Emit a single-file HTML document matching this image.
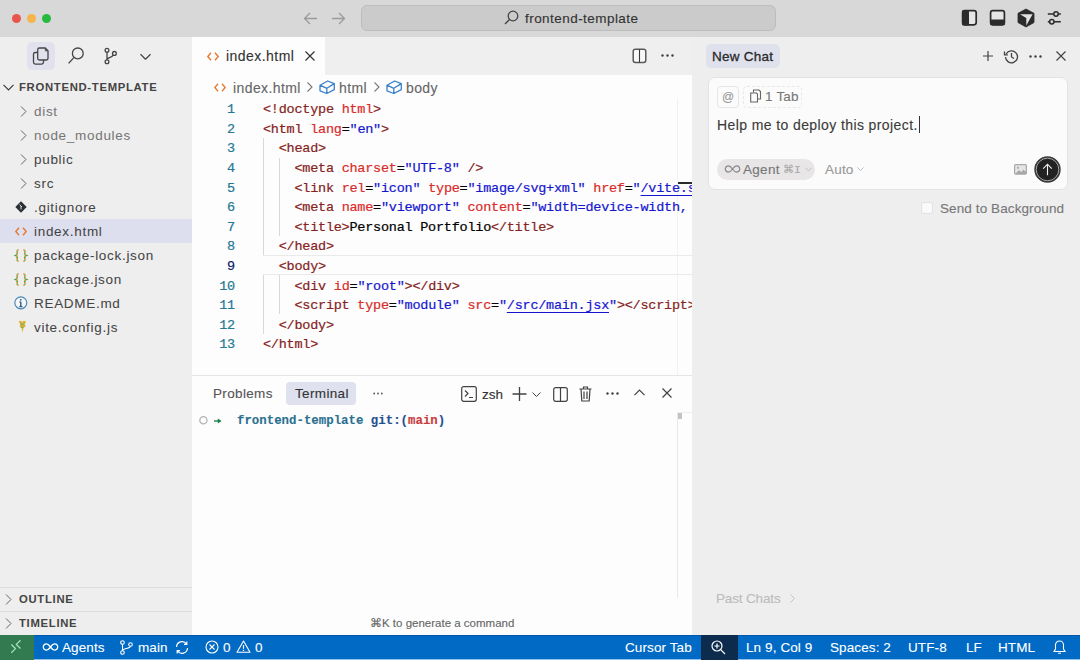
<!DOCTYPE html>
<html><head><meta charset="utf-8">
<style>
*{box-sizing:border-box;margin:0;padding:0}
html,body{width:1080px;height:660px;overflow:hidden;background:#eeeeee;font-family:"Liberation Sans",sans-serif;color:#333}
.a{position:absolute}
.t{position:absolute;white-space:pre;line-height:1;-webkit-text-stroke:0.12px currentColor}
svg{position:absolute;overflow:visible}
/* title bar */
#title{left:0;top:0;width:1080px;height:37px;background:#d8d8d8}
.dot{position:absolute;width:9px;height:9px;border-radius:50%;top:13.5px}
/* sidebar */
#side{left:0;top:37px;width:192px;height:598px;background:#eeeeee}
.row{position:absolute;left:0;width:192px;height:24px}
.row .n{position:absolute;left:34px;top:5.5px;font-size:13.5px;color:#444;letter-spacing:0.7px;-webkit-text-stroke:0.04px currentColor;white-space:pre;line-height:1}
/* editor */
#editor{left:192px;top:37px;width:500px;height:598px;background:#fdfdfd}
#tabbar{left:192px;top:37px;width:500px;height:38px;background:#efefef}
#tab{left:192px;top:37px;width:133px;height:38px;background:#fdfdfd}
.code{position:absolute;left:263px;font-family:"Liberation Mono",monospace;font-size:13.5px;letter-spacing:-0.24px;line-height:19.6px;white-space:pre;color:#000}
.ln{position:absolute;left:200px;width:35px;text-align:right;font-family:"Liberation Mono",monospace;font-size:13.5px;letter-spacing:-0.2px;line-height:19.6px;color:#237893}
.code,.ln{-webkit-text-stroke:0.2px currentColor}
u{text-underline-offset:2.5px;text-decoration-thickness:1.3px}
.tg{color:#852222}.at{color:#d92b2b}.vl{color:#1616d0}
/* chat */
#chat{left:692px;top:37px;width:388px;height:598px;background:#eeeeee}
#status{left:0;top:635px;width:1080px;height:25px;background:#006ac4;border-top:1px solid #0256ac;border-bottom:1px solid #8fc2ec}
.st{position:absolute;top:641px;font-size:13.5px;color:#ffffff;white-space:pre;line-height:1;letter-spacing:0.1px;-webkit-text-stroke:0.1px #fff}
</style></head>
<body>
<!-- TITLE BAR -->
<div id="title" class="a"></div>
<div class="dot" style="left:11.5px;background:#e8554d"></div>
<div class="dot" style="left:26.5px;background:#f5b54a"></div>
<div class="dot" style="left:41.5px;background:#26bb3d"></div>
<svg style="left:303px;top:12px" width="15" height="13" viewBox="0 0 15 13"><path d="M14 6.5H1.5M7 1L1.5 6.5L7 12" fill="none" stroke="#9a9a9a" stroke-width="1.3"/></svg>
<svg style="left:331px;top:12px" width="15" height="13" viewBox="0 0 15 13"><path d="M1 6.5H13.5M8 1L13.5 6.5L8 12" fill="none" stroke="#9a9a9a" stroke-width="1.3"/></svg>
<div class="a" style="left:361px;top:5px;width:415px;height:26px;background:#cbcbcb;border:1px solid #bdbdbd;border-radius:6px"></div>
<svg style="left:504px;top:10px" width="15" height="15" viewBox="0 0 15 15"><circle cx="9" cy="6" r="4.8" fill="none" stroke="#444" stroke-width="1.3"/><path d="M5.5 9.5L1 14" stroke="#444" stroke-width="1.4"/></svg>
<div class="t" style="left:525px;top:12px;font-size:13.5px;color:#333;letter-spacing:0.45px">frontend-template</div>
<!-- right title icons -->
<svg style="left:961px;top:9px" width="17" height="17" viewBox="0 0 17 17"><rect x="1.6" y="1.6" width="13.6" height="14.2" rx="2.2" fill="#e6e6e6" stroke="#2b2b2b" stroke-width="1.7"/><rect x="1" y="1" width="7" height="15.4" rx="1.5" fill="#2b2b2b"/></svg>
<svg style="left:989px;top:9px" width="17" height="17" viewBox="0 0 17 17"><rect x="1.6" y="1.6" width="13.8" height="14.2" rx="2.2" fill="#e6e6e6" stroke="#2b2b2b" stroke-width="1.7"/><rect x="1" y="10.5" width="15" height="5.8" rx="1.5" fill="#2b2b2b"/></svg>
<svg style="left:1017px;top:8px" width="18" height="20" viewBox="0 0 18 20"><path d="M9 1L17 5.3V14.5L9 19L1 14.5V5.3Z" fill="#2b2b2b" stroke="#2b2b2b" stroke-width="0.8" stroke-linejoin="round"/><path d="M3 6.3H15.6L9.3 17.6V10Z" fill="#e2e2e2"/></svg>
<svg style="left:1047px;top:10px" width="15" height="15" viewBox="0 0 15 15"><path d="M0.8 4H6.8M11.2 4H13.8M0.8 11.7H2.6M7 11.7H13.8" stroke="#2b2b2b" stroke-width="1.5"/><circle cx="9" cy="4" r="2.2" fill="none" stroke="#2b2b2b" stroke-width="1.5"/><circle cx="4.8" cy="11.7" r="2.2" fill="none" stroke="#2b2b2b" stroke-width="1.5"/></svg>

<!-- SIDEBAR -->
<div id="side" class="a"></div>
<div class="a" style="left:27px;top:42px;width:28px;height:28px;background:#e1e2ee;border-radius:5px"></div>
<svg style="left:0;top:0" width="192" height="80" viewBox="0 0 192 80"><g fill="none" stroke="#454545" stroke-width="1.3" stroke-linejoin="round">
<path d="M37.5 52.5H35.3A1.8 1.8 0 0 0 33.5 54.3V62.3A1.8 1.8 0 0 0 35.3 64.1H41.7A1.8 1.8 0 0 0 43.5 62.3V60"/>
<path d="M39.5 48H45.3L48 50.8V58.2A1.8 1.8 0 0 1 46.2 60H39.5A1.8 1.8 0 0 1 37.7 58.2V49.8A1.8 1.8 0 0 1 39.5 48Z"/>
<path d="M45.3 48.2V50.8H47.8" stroke-width="1"/>
<circle cx="77.8" cy="53.4" r="5.4"/><path d="M73.8 57.6L68.6 63.4" stroke-width="1.4"/>
<circle cx="107" cy="50.3" r="1.9"/><circle cx="107" cy="61.8" r="1.9"/><circle cx="114.4" cy="53.4" r="1.9"/>
<path d="M107 52.2V59.9M113.2 54.9C112 57.6 108.5 57.5 107 59.2"/>
<path d="M140.5 54.3L145.5 59.2L150.5 54.3" stroke-width="1.2"/>
</g></svg>

<svg style="left:3px;top:84px" width="11" height="7" viewBox="0 0 11 7"><path d="M0.5 0.8L5.5 5.8L10.5 0.8" fill="none" stroke="#3b3b3b" stroke-width="1.2"/></svg>
<div class="t" style="left:19px;top:82px;font-size:11.3px;font-weight:bold;color:#444;letter-spacing:0.7px;-webkit-text-stroke:0">FRONTEND-TEMPLATE</div>

<div class="row" style="top:99px"><svg style="left:20px;top:7px" width="7" height="11" viewBox="0 0 7 11"><path d="M1 0.5L6 5.5L1 10.5" fill="none" stroke="#666" stroke-width="1"/></svg><div class="n" style="color:#777">dist</div></div>
<div class="row" style="top:123px"><svg style="left:20px;top:7px" width="7" height="11" viewBox="0 0 7 11"><path d="M1 0.5L6 5.5L1 10.5" fill="none" stroke="#666" stroke-width="1"/></svg><div class="n" style="color:#777">node_modules</div></div>
<div class="row" style="top:147px"><svg style="left:20px;top:7px" width="7" height="11" viewBox="0 0 7 11"><path d="M1 0.5L6 5.5L1 10.5" fill="none" stroke="#666" stroke-width="1"/></svg><div class="n">public</div></div>
<div class="row" style="top:171px"><svg style="left:20px;top:7px" width="7" height="11" viewBox="0 0 7 11"><path d="M1 0.5L6 5.5L1 10.5" fill="none" stroke="#666" stroke-width="1"/></svg><div class="n">src</div></div>
<div class="row" style="top:195px"><svg style="left:15px;top:6px" width="12" height="12" viewBox="0 0 12 12"><path d="M6 0.3L11.7 6L6 11.7L0.3 6Z" fill="#2a2f33"/><path d="M4.5 3.5L7 6M6 5V8.5" stroke="#eee" stroke-width="0.9"/></svg><div class="n">.gitignore</div></div>
<div class="row" style="top:219px;background:#dedfee"><svg style="left:15px;top:8px" width="12" height="9" viewBox="0 0 12 9"><path d="M4 0.8L0.8 4.5L4 8.2M8 0.8L11.2 4.5L8 8.2" fill="none" stroke="#e37933" stroke-width="1.4"/></svg><div class="n">index.html</div></div>
<div class="row" style="top:243px"><svg style="left:15px;top:5.5px" width="12" height="13" viewBox="0 0 12 13"><path d="M3.6 0.8C1.8 0.8 2.2 2.5 2.2 4.3C2.2 5.6 1.6 6.2 0.8 6.5C1.6 6.8 2.2 7.4 2.2 8.7C2.2 10.5 1.8 12.2 3.6 12.2M8.4 0.8C10.2 0.8 9.8 2.5 9.8 4.3C9.8 5.6 10.4 6.2 11.2 6.5C10.4 6.8 9.8 7.4 9.8 8.7C9.8 10.5 10.2 12.2 8.4 12.2" fill="none" stroke="#d49a30" stroke-width="1.7" stroke-dasharray="1.6 0.9"/><path d="M3.6 0.8C1.8 0.8 2.2 2.5 2.2 4.3C2.2 5.6 1.6 6.2 0.8 6.5C1.6 6.8 2.2 7.4 2.2 8.7C2.2 10.5 1.8 12.2 3.6 12.2M8.4 0.8C10.2 0.8 9.8 2.5 9.8 4.3C9.8 5.6 10.4 6.2 11.2 6.5C10.4 6.8 9.8 7.4 9.8 8.7C9.8 10.5 10.2 12.2 8.4 12.2" fill="none" stroke="#4c9f58" stroke-width="1.7" stroke-dasharray="0.9 1.6" stroke-dashoffset="-1.6"/></svg><div class="n">package-lock.json</div></div>
<div class="row" style="top:267px"><svg style="left:15px;top:5.5px" width="12" height="13" viewBox="0 0 12 13"><path d="M3.6 0.8C1.8 0.8 2.2 2.5 2.2 4.3C2.2 5.6 1.6 6.2 0.8 6.5C1.6 6.8 2.2 7.4 2.2 8.7C2.2 10.5 1.8 12.2 3.6 12.2M8.4 0.8C10.2 0.8 9.8 2.5 9.8 4.3C9.8 5.6 10.4 6.2 11.2 6.5C10.4 6.8 9.8 7.4 9.8 8.7C9.8 10.5 10.2 12.2 8.4 12.2" fill="none" stroke="#d49a30" stroke-width="1.7" stroke-dasharray="1.6 0.9"/><path d="M3.6 0.8C1.8 0.8 2.2 2.5 2.2 4.3C2.2 5.6 1.6 6.2 0.8 6.5C1.6 6.8 2.2 7.4 2.2 8.7C2.2 10.5 1.8 12.2 3.6 12.2M8.4 0.8C10.2 0.8 9.8 2.5 9.8 4.3C9.8 5.6 10.4 6.2 11.2 6.5C10.4 6.8 9.8 7.4 9.8 8.7C9.8 10.5 10.2 12.2 8.4 12.2" fill="none" stroke="#4c9f58" stroke-width="1.7" stroke-dasharray="0.9 1.6" stroke-dashoffset="-1.6"/></svg><div class="n">package.json</div></div>
<div class="row" style="top:291px"><svg style="left:14px;top:4.5px" width="14" height="14" viewBox="0 0 14 14"><circle cx="6.8" cy="6.8" r="6" fill="#f4f6f8" stroke="#4c88b6" stroke-width="1.2"/><path d="M6.8 6V10.6M5.3 10.6H8.4M5.5 6H6.8" stroke="#2a5d85" stroke-width="1.4"/><circle cx="6.8" cy="3.8" r="0.9" fill="#2a5d85"/></svg><div class="n">README.md</div></div>
<div class="row" style="top:315px"><svg style="left:17.5px;top:4.5px" width="9" height="13" viewBox="0 0 9 13"><path d="M0.5 1.2L3 0.8L4.2 2L5.5 0.8L8.2 1.2L6.8 4L7.6 6.2L5.6 8L4.3 12.5L3.6 8.2L1.6 6.4L2.2 4Z" fill="#e0b33c"/><path d="M2.2 3.2L4.3 5L6.4 3.2M3 6.5L4.3 8L5.8 6.5" fill="none" stroke="#5aa85e" stroke-width="0.9"/></svg><div class="n">vite.config.js</div></div>

<div class="a" style="left:0;top:587px;width:192px;height:1px;background:#dcdcdc"></div>
<div class="a" style="left:0;top:611px;width:192px;height:1px;background:#dcdcdc"></div>
<svg style="left:5px;top:594px" width="7" height="11" viewBox="0 0 7 11"><path d="M1 0.5L6 5.5L1 10.5" fill="none" stroke="#666" stroke-width="1"/></svg>
<div class="t" style="left:19px;top:594px;font-size:11.3px;font-weight:bold;color:#444;letter-spacing:0.7px;-webkit-text-stroke:0">OUTLINE</div>
<svg style="left:5px;top:618px" width="7" height="11" viewBox="0 0 7 11"><path d="M1 0.5L6 5.5L1 10.5" fill="none" stroke="#666" stroke-width="1"/></svg>
<div class="t" style="left:19px;top:618px;font-size:11.3px;font-weight:bold;color:#444;letter-spacing:0.7px;-webkit-text-stroke:0">TIMELINE</div>

<!-- EDITOR -->
<div id="editor" class="a"></div>
<div id="tabbar" class="a"></div>
<div id="tab" class="a"></div>
<svg style="left:207px;top:52px" width="12" height="9" viewBox="0 0 12 9"><path d="M4 0.8L0.8 4.5L4 8.2M8 0.8L11.2 4.5L8 8.2" fill="none" stroke="#e37933" stroke-width="1.4"/></svg>
<div class="t" style="left:226px;top:49px;font-size:14px;color:#333;letter-spacing:0.45px">index.html</div>
<svg style="left:305px;top:51px" width="10" height="10" viewBox="0 0 10 10"><path d="M0.5 0.5L9.5 9.5M9.5 0.5L0.5 9.5" stroke="#333" stroke-width="1.2"/></svg>
<svg style="left:632px;top:47.5px" width="15" height="16" viewBox="0 0 15 16"><rect x="1.2" y="1.2" width="12.6" height="13.2" rx="2.2" fill="#f8f8f8" stroke="#5a5a5a" stroke-width="1.5"/><path d="M7.5 1.2V14.4" stroke="#3a3a3a" stroke-width="1.1"/></svg>
<svg style="left:661px;top:54px" width="13" height="3" viewBox="0 0 13 3"><circle cx="1.5" cy="1.5" r="1.2" fill="#424242"/><circle cx="6.5" cy="1.5" r="1.2" fill="#424242"/><circle cx="11.5" cy="1.5" r="1.2" fill="#424242"/></svg>

<!-- breadcrumb -->
<svg style="left:214px;top:83px" width="12" height="9" viewBox="0 0 12 9"><path d="M4 0.8L0.8 4.5L4 8.2M8 0.8L11.2 4.5L8 8.2" fill="none" stroke="#e37933" stroke-width="1.3"/></svg>
<div class="t" style="left:233px;top:81px;font-size:14px;color:#666;letter-spacing:0.4px">index.html</div>
<svg style="left:307px;top:82px" width="6" height="10" viewBox="0 0 6 10"><path d="M0.5 0.5L5 5L0.5 9.5" fill="none" stroke="#777" stroke-width="1.1"/></svg>
<svg style="left:319px;top:80px" width="16" height="14" viewBox="0 0 16 14"><path d="M1 5.2L8.6 1L15.3 3.6V9.6L7.8 13.5L1 10.8Z M1 5.2L7.8 8.3L15.3 3.6 M7.8 8.3V13.5" fill="none" stroke="#3a80c8" stroke-width="1.3" stroke-linejoin="round"/></svg>
<div class="t" style="left:339px;top:81px;font-size:14px;color:#666;letter-spacing:0.4px">html</div>
<svg style="left:374px;top:82px" width="6" height="10" viewBox="0 0 6 10"><path d="M0.5 0.5L5 5L0.5 9.5" fill="none" stroke="#777" stroke-width="1.1"/></svg>
<svg style="left:386px;top:80px" width="16" height="14" viewBox="0 0 16 14"><path d="M1 5.2L8.6 1L15.3 3.6V9.6L7.8 13.5L1 10.8Z M1 5.2L7.8 8.3L15.3 3.6 M7.8 8.3V13.5" fill="none" stroke="#3a80c8" stroke-width="1.3" stroke-linejoin="round"/></svg>
<div class="t" style="left:406px;top:81px;font-size:14px;color:#666;letter-spacing:0.4px">body</div>

<div class="a" style="left:677px;top:98px;width:1px;height:277px;background:#f2f2f2"></div>
<!-- current line -->
<div class="a" style="left:263px;top:255px;width:429px;height:20px;border-top:1px solid #eaeaea;border-bottom:1px solid #eaeaea"></div>
<!-- indent guides -->
<div class="a" style="left:263px;top:138px;width:1px;height:117px;background:#d9d9d9"></div>
<div class="a" style="left:279px;top:158px;width:1px;height:78px;background:#d9d9d9"></div>
<div class="a" style="left:263px;top:275px;width:1px;height:59px;background:#d9d9d9"></div>
<div class="a" style="left:279px;top:275px;width:1px;height:39px;background:#d9d9d9"></div>

<div class="ln" style="top:100.2px">1<br>2<br>3<br>4<br>5<br>6<br>7<br>8<br><span style="color:#0b216f">9</span><br>10<br>11<br>12<br>13</div>
<div class="code" style="top:100.2px;width:429px;overflow:hidden"><span class="tg">&lt;!doctype</span> <span class="at">html</span><span class="tg">&gt;</span>
<span class="tg">&lt;html</span> <span class="at">lang</span>=<span class="vl">"en"</span><span class="tg">&gt;</span>
  <span class="tg">&lt;head&gt;</span>
    <span class="tg">&lt;meta</span> <span class="at">charset</span>=<span class="vl">"UTF-8"</span> <span class="tg">/&gt;</span>
    <span class="tg">&lt;link</span> <span class="at">rel</span>=<span class="vl">"icon"</span> <span class="at">type</span>=<span class="vl">"image/svg+xml"</span> <span class="at">href</span>=<span class="vl">"<u>/vite.svg</u>"</span> <span class="tg">/&gt;</span>
    <span class="tg">&lt;meta</span> <span class="at">name</span>=<span class="vl">"viewport"</span> <span class="at">content</span>=<span class="vl">"width=device-width, initial-scale=1.0"</span> <span class="tg">/&gt;</span>
    <span class="tg">&lt;title&gt;</span>Personal Portfolio<span class="tg">&lt;/title&gt;</span>
  <span class="tg">&lt;/head&gt;</span>
  <span class="tg">&lt;body&gt;</span>
    <span class="tg">&lt;div</span> <span class="at">id</span>=<span class="vl">"root"</span><span class="tg">&gt;&lt;/div&gt;</span>
    <span class="tg">&lt;script</span> <span class="at">type</span>=<span class="vl">"module"</span> <span class="at">src</span>=<span class="vl">"<u>/src/main.jsx</u>"</span><span class="tg">&gt;&lt;/script&gt;</span>
  <span class="tg">&lt;/body&gt;</span>
<span class="tg">&lt;/html&gt;</span></div>

<div class="a" style="left:678px;top:182px;width:14px;height:2px;background:#2a2a2a"></div>
<!-- PANEL -->
<div class="a" style="left:192px;top:375px;width:500px;height:1px;background:#e5e5e5"></div>
<div class="t" style="left:213px;top:387px;font-size:13.5px;color:#555;letter-spacing:0.35px">Problems</div>
<div class="a" style="left:286px;top:382px;width:70px;height:23px;background:#dfe1ee;border-radius:4px"></div>
<div class="t" style="left:295px;top:387px;font-size:13.5px;color:#333;letter-spacing:0.35px">Terminal</div>
<svg style="left:373px;top:392px" width="10" height="3" viewBox="0 0 10 3"><circle cx="1.2" cy="1.5" r="0.9" fill="#555"/><circle cx="5" cy="1.5" r="0.9" fill="#555"/><circle cx="8.8" cy="1.5" r="0.9" fill="#555"/></svg>
<svg style="left:461px;top:386px" width="16" height="16" viewBox="0 0 16 16"><rect x="0.7" y="0.7" width="14.6" height="14.6" rx="2" fill="none" stroke="#424242" stroke-width="1.2"/><path d="M4 4.5L7 7.5L4 10.5M8 11.5H12" fill="none" stroke="#424242" stroke-width="1.2"/></svg>
<div class="t" style="left:482px;top:388px;font-size:13.5px;color:#333">zsh</div>
<svg style="left:512px;top:387px" width="15" height="14" viewBox="0 0 15 14"><path d="M7.5 0V14M0.5 7H14.5" stroke="#424242" stroke-width="1.3"/></svg>
<svg style="left:532px;top:392px" width="9" height="5" viewBox="0 0 9 5"><path d="M0.5 0.5L4.5 4.5L8.5 0.5" fill="none" stroke="#424242" stroke-width="1"/></svg>
<svg style="left:553px;top:387px" width="15" height="15" viewBox="0 0 15 15"><rect x="0.7" y="0.7" width="13.6" height="13.6" rx="2" fill="none" stroke="#424242" stroke-width="1.2"/><path d="M7.5 0.7V14.3" stroke="#424242" stroke-width="1.2"/></svg>
<svg style="left:579px;top:386px" width="13" height="16" viewBox="0 0 13 16"><path d="M0.5 3H12.5M4.5 3V1H8.5V3M2 3L2.8 15H10.2L11 3M5 5.5V13M8 5.5V13" fill="none" stroke="#424242" stroke-width="1.2"/></svg>
<svg style="left:606px;top:392px" width="13" height="3" viewBox="0 0 13 3"><circle cx="1.5" cy="1.5" r="1.2" fill="#424242"/><circle cx="6.5" cy="1.5" r="1.2" fill="#424242"/><circle cx="11.5" cy="1.5" r="1.2" fill="#424242"/></svg>
<svg style="left:634px;top:389px" width="11" height="7" viewBox="0 0 11 7"><path d="M0.5 6.2L5.5 1.2L10.5 6.2" fill="none" stroke="#424242" stroke-width="1.2"/></svg>
<svg style="left:662px;top:388px" width="10" height="10" viewBox="0 0 10 10"><path d="M0.5 0.5L9.5 9.5M9.5 0.5L0.5 9.5" stroke="#424242" stroke-width="1.2"/></svg>
<svg style="left:199px;top:415.5px" width="9" height="9" viewBox="0 0 9 9"><circle cx="4.4" cy="4.2" r="3.6" fill="none" stroke="#b4b4b4" stroke-width="1.3"/></svg>
<svg style="left:213.5px;top:418px" width="8" height="6" viewBox="0 0 8 6"><path d="M0 3H4.5" stroke="#17804a" stroke-width="1.4"/><path d="M3.8 0.4L7.6 3L3.8 5.6Z" fill="#17804a"/></svg>
<div class="t" style="left:237px;top:415px;font-family:'Liberation Mono',monospace;font-size:12.4px;font-weight:bold;color:#2b7090">frontend-template <span style="color:#1f4f8f">git:(</span><span style="color:#c83b3b">main</span><span style="color:#1f4f8f">)</span></div>
<div class="a" style="left:677px;top:412px;width:1px;height:186px;background:#e9e9e9"></div>
<div class="a" style="left:677px;top:412px;width:15px;height:1px;background:#efefef"></div>
<div class="a" style="left:678px;top:413px;width:4px;height:6px;background:#c4c4c4"></div>
<div class="t" style="left:370px;top:618px;font-size:11.5px;color:#666;letter-spacing:0px">⌘K to generate a command</div>

<!-- CHAT -->
<div id="chat" class="a"></div>
<div class="a" style="left:706px;top:44px;width:74px;height:24px;background:#dfe1ec;border-radius:5px"></div>
<div class="t" style="left:712px;top:50px;font-size:13.5px;color:#2a2a2a;letter-spacing:0.25px;-webkit-text-stroke:0.3px #2a2a2a">New Chat</div>
<svg style="left:983px;top:51px" width="10" height="10" viewBox="0 0 10 10"><path d="M5 0V10M0 5H10" stroke="#424242" stroke-width="1.2"/></svg>
<svg style="left:1004px;top:49px" width="15" height="15" viewBox="0 0 15 15"><path d="M2.2 5A6 6 0 1 1 1.5 8" fill="none" stroke="#424242" stroke-width="1.3"/><path d="M0.5 2.5V5.8H3.8" fill="none" stroke="#424242" stroke-width="1.3"/><path d="M7.5 4V8L10 9.5" fill="none" stroke="#424242" stroke-width="1.3"/></svg>
<svg style="left:1029px;top:55px" width="13" height="3" viewBox="0 0 13 3"><circle cx="1.5" cy="1.5" r="1.2" fill="#424242"/><circle cx="6.5" cy="1.5" r="1.2" fill="#424242"/><circle cx="11.5" cy="1.5" r="1.2" fill="#424242"/></svg>
<svg style="left:1056px;top:51px" width="10" height="10" viewBox="0 0 10 10"><path d="M0.5 0.5L9.5 9.5M9.5 0.5L0.5 9.5" stroke="#424242" stroke-width="1.2"/></svg>

<div class="a" style="left:708px;top:77px;width:360px;height:113px;background:#fcfbfb;border:1px solid #e3e3e3;border-radius:7px"></div>
<div class="a" style="left:717px;top:86px;width:22px;height:22px;border:1px solid #e6e6e6;border-radius:4px"></div>
<div class="t" style="left:722px;top:91px;font-size:12px;color:#999">@</div>
<div class="a" style="left:743px;top:86px;width:59px;height:22px;border:1px dashed #e9e7e7;border-radius:4px"></div>
<svg style="left:750px;top:89px" width="11" height="14" viewBox="0 0 11 14"><path d="M3.5 3.5V1H9L10.5 2.5V10H7.5" fill="none" stroke="#666" stroke-width="1.1"/><path d="M0.7 4H6.5L7.5 5V13H0.7Z" fill="none" stroke="#666" stroke-width="1.1"/></svg>
<div class="t" style="left:765px;top:90px;font-size:13.5px;color:#777;letter-spacing:0.2px">1 Tab</div>
<div class="t" style="left:717px;top:118px;font-size:14px;color:#3a3a3a;letter-spacing:0.4px">Help me to deploy this project.</div>
<div class="a" style="left:919px;top:116px;width:1px;height:17px;background:#333"></div>

<div class="a" style="left:717px;top:159px;width:98px;height:21px;background:#e8e6e6;border-radius:11px"></div>
<svg style="left:725px;top:165px" width="15" height="8" viewBox="0 0 15 8"><path d="M7.5 4C5.5 1.2 4.5 0.8 3.5 0.8A3.2 3.2 0 0 0 3.5 7.2C4.5 7.2 5.5 6.8 7.5 4C9.5 1.2 10.5 0.8 11.5 0.8A3.2 3.2 0 0 1 11.5 7.2C10.5 7.2 9.5 6.8 7.5 4Z" fill="none" stroke="#888" stroke-width="1.2"/></svg>
<div class="t" style="left:743px;top:163px;font-size:13.5px;color:#777;letter-spacing:0.3px">Agent</div>
<div class="t" style="left:783px;top:164px;font-size:10.5px;color:#aaa">⌘<span style="font-family:'Liberation Mono',monospace;font-size:11.5px">I</span></div>
<svg style="left:805px;top:167px" width="7" height="5" viewBox="0 0 7 5"><path d="M0.5 0.8L3.5 3.8L6.5 0.8" fill="none" stroke="#b8b8b8" stroke-width="0.9"/></svg>
<div class="t" style="left:825px;top:163px;font-size:13.5px;color:#999;letter-spacing:0.2px">Auto</div>
<svg style="left:857px;top:167px" width="7" height="5" viewBox="0 0 7 5"><path d="M0.5 0.5L3.5 3.5L6.5 0.5" fill="none" stroke="#bbb" stroke-width="1"/></svg>
<svg style="left:1014px;top:164px" width="13" height="11" viewBox="0 0 13 11"><rect x="0.6" y="0.6" width="11.8" height="9.6" rx="1.2" fill="#e6e4e4" stroke="#a8a8a8" stroke-width="1.2"/><path d="M1 10L5 6.2L7.5 8L9.5 5.5L12.4 8.5V10Z" fill="#a8a8a8"/><circle cx="4" cy="3.8" r="1.1" fill="#a8a8a8"/></svg>
<svg style="left:1034px;top:156px" width="27" height="27" viewBox="0 0 27 27"><circle cx="13.5" cy="13.5" r="12.6" fill="#222" stroke="#3a3a3a" stroke-width="1.2"/><circle cx="13.5" cy="13.5" r="11.3" fill="none" stroke="#b9b5b5" stroke-width="0.9"/></svg>
<svg style="left:1042px;top:163px" width="11" height="13" viewBox="0 0 11 13"><path d="M5.5 12.2V1.2M1.2 5.6L5.5 1.2L9.8 5.6" fill="none" stroke="#f2f2f2" stroke-width="1.1"/></svg>

<div class="a" style="left:921px;top:202px;width:12px;height:12px;background:#fafafa;border:1px solid #e2e2e2;border-radius:3px"></div>
<div class="t" style="left:940px;top:202px;font-size:13.5px;color:#777;letter-spacing:0.1px">Send to Background</div>
<div class="t" style="left:716px;top:592px;font-size:13.5px;color:#bcbcbc;letter-spacing:-0.15px">Past Chats</div>
<svg style="left:790px;top:594px" width="5" height="9" viewBox="0 0 5 9"><path d="M0.5 0.5L4.5 4.5L0.5 8.5" fill="none" stroke="#c4c4c4" stroke-width="1"/></svg>

<!-- STATUS -->
<div id="status" class="a"></div>
<div class="a" style="left:0;top:635px;width:34px;height:25px;background:#327a50"></div>
<svg style="left:10px;top:639px" width="12" height="15" viewBox="0 0 12 15"><path d="M1.3 5.5L5.5 9.6L1.3 13.7M10.5 1.3L6.3 5.4L10.5 9.5" fill="none" stroke="#a6e6bd" stroke-width="1.2"/></svg>
<svg style="left:43px;top:643px" width="15" height="8" viewBox="0 0 15 8"><path d="M7.5 4C5.5 1.2 4.5 0.8 3.5 0.8A3.2 3.2 0 0 0 3.5 7.2C4.5 7.2 5.5 6.8 7.5 4C9.5 1.2 10.5 0.8 11.5 0.8A3.2 3.2 0 0 1 11.5 7.2C10.5 7.2 9.5 6.8 7.5 4Z" fill="none" stroke="#fff" stroke-width="1.3"/></svg>
<div class="st" style="left:62px">Agents</div>
<svg style="left:120px;top:640px" width="13" height="15" viewBox="0 0 13 15"><circle cx="2.5" cy="2.5" r="1.8" fill="none" stroke="#fff" stroke-width="1.1"/><circle cx="2.5" cy="12.5" r="1.8" fill="none" stroke="#fff" stroke-width="1.1"/><circle cx="10.5" cy="4.5" r="1.8" fill="none" stroke="#fff" stroke-width="1.1"/><path d="M2.5 4.3V10.7M10.5 6.3C10.5 9 2.5 8 2.5 10.7" fill="none" stroke="#fff" stroke-width="1.1"/></svg>
<div class="st" style="left:138px">main</div>
<svg style="left:175px;top:641px" width="14" height="13" viewBox="0 0 14 13"><path d="M1.5 6A5.5 5.5 0 0 1 11.5 3M12.5 7A5.5 5.5 0 0 1 2.5 10M11.8 0.5V3.3H9M2.2 12.5V9.7H5" fill="none" stroke="#fff" stroke-width="1.2"/></svg>
<svg style="left:205px;top:640px" width="14" height="14" viewBox="0 0 14 14"><circle cx="7" cy="7" r="6" fill="none" stroke="#fff" stroke-width="1.1"/><path d="M4.5 4.5L9.5 9.5M9.5 4.5L4.5 9.5" stroke="#fff" stroke-width="1.1"/></svg>
<div class="st" style="left:223px">0</div>
<svg style="left:236px;top:640px" width="15" height="13" viewBox="0 0 15 13"><path d="M7.5 1L14 12.3H1Z" fill="none" stroke="#fff" stroke-width="1.1" stroke-linejoin="round"/><path d="M7.5 5V8.8M7.5 9.8V11" stroke="#fff" stroke-width="1.2"/></svg>
<div class="st" style="left:255px">0</div>
<div class="st" style="left:625px">Cursor Tab</div>
<div class="a" style="left:701px;top:635px;width:37px;height:25px;background:#0d2b4d"></div>
<svg style="left:711px;top:640px" width="15" height="15" viewBox="0 0 15 15"><circle cx="6" cy="6" r="5" fill="none" stroke="#fff" stroke-width="1.2"/><path d="M9.7 9.7L14 14M3.5 6H8.5M6 3.5V8.5" stroke="#fff" stroke-width="1.2"/></svg>
<div class="st" style="left:746px">Ln 9, Col 9</div>
<div class="st" style="left:830px">Spaces: 2</div>
<div class="st" style="left:908px">UTF-8</div>
<div class="st" style="left:966px">LF</div>
<div class="st" style="left:998px">HTML</div>
<svg style="left:1053px;top:640px" width="13" height="15" viewBox="0 0 13 15"><path d="M6.5 1A4 4 0 0 1 10.5 5V9L12 11.5H1L2.5 9V5A4 4 0 0 1 6.5 1ZM5 13.2H8" fill="none" stroke="#fff" stroke-width="1.1"/></svg>
</body></html>
